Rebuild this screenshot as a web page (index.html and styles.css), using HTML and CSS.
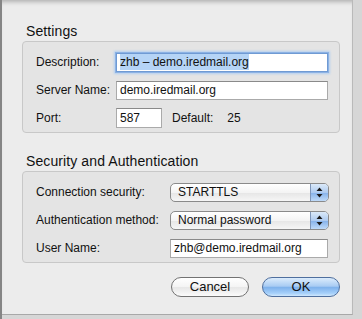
FILE: index.html
```html
<!DOCTYPE html>
<html>
  <head>
    <title>Account Settings</title>
    <link rel="stylesheet" href="styles.css">
  </head>
  <body>
    <div class="desk">
      <div class="sheet">
        <h2 class="group-title">Settings</h2>
        <div class="group">
          <div class="row">
            <span class="label">Description:</span>
            <div class="field focused"><span class="selected">zhb – demo.iredmail.org</span></div>
          </div>
          <div class="row">
            <span class="label">Server Name:</span>
            <div class="field">demo.iredmail.org</div>
          </div>
          <div class="row">
            <span class="label">Port:</span>
            <div class="field port">587</div>
            <span class="default-label">Default:</span>
            <span class="default-value">25</span>
          </div>
        </div>

        <h2 class="group-title">Security and Authentication</h2>
        <div class="group security">
          <div class="row">
            <span class="label">Connection security:</span>
            <div class="popup">
              <span class="popup-text">STARTTLS</span>
              <span class="popup-arrows">
                <svg width="7" height="11" viewBox="0 0 7 11">
                  <path d="M3.5 0.5 L6.5 4 H0.5 Z M3.5 10.5 L6.5 7 H0.5 Z" fill="#1a1a1a"/>
                </svg>
              </span>
            </div>
          </div>
          <div class="row">
            <span class="label">Authentication method:</span>
            <div class="popup">
              <span class="popup-text">Normal password</span>
              <span class="popup-arrows">
                <svg width="7" height="11" viewBox="0 0 7 11">
                  <path d="M3.5 0.5 L6.5 4 H0.5 Z M3.5 10.5 L6.5 7 H0.5 Z" fill="#1a1a1a"/>
                </svg>
              </span>
            </div>
          </div>
          <div class="row">
            <span class="label">User Name:</span>
            <div class="field user">zhb@demo.iredmail.org</div>
          </div>
        </div>

        <div class="actions">
          <button class="btn" type="button">Cancel</button>
          <button class="btn btn-primary" type="button">OK</button>
        </div>
      </div>
    </div>
  </body>
</html>
```

FILE: styles.css
```css
body {
  margin: 0;
  font-family: "Liberation Sans", Arial, sans-serif;
  font-size: 12px;
  color: #111;
}

.desk {
  display: flex;
  align-items: flex-start;
  width: 362px;
  height: 319px;
  box-sizing: border-box;
  border-left: 2px solid #858585;
  background-color: #d6d6d6;
}

.sheet {
  width: 351px;
  height: 315px;
  box-sizing: border-box;
  padding: 23px 0 0 20px;
  background-color: #ececec;
  border-right: 1px solid #b9b9b9;
  border-bottom: 1px solid #a8a8a8;
  box-shadow: inset 0 5px 4px -3px rgba(0, 0, 0, 0.25);
}

.group-title {
  margin: 0 0 2px 4px;
  font-size: 14px;
  font-weight: normal;
  line-height: 16px;
  letter-spacing: 0.1px;
}

.group + .group-title {
  margin-top: 20px;
}

.group {
  width: 318px;
  box-sizing: border-box;
  padding: 10px 11px 4px 13px;
  display: flex;
  flex-direction: column;
  gap: 8px;
  background-color: #e4e4e4;
  border: 1px solid #c8c8c8;
  border-radius: 4px;
}

.group.security {
  padding-right: 10px;
}

.row {
  display: flex;
  align-items: center;
  height: 20px;
}

.label {
  width: 80px;
  flex: none;
}

.security .label {
  width: 134px;
}

.field {
  flex: 1;
  height: 19px;
  box-sizing: border-box;
  padding: 0 3px;
  line-height: 17px;
  background-color: #fff;
  border: 1px solid #aaa;
  border-top-color: #8a8a8a;
  white-space: nowrap;
}

.field.focused {
  border-color: #6f9ad3;
  box-shadow: 0 0 0 1px #8cb2e4, 0 0 2px 2px #b3cff0;
}

.field .selected {
  background-color: #b5d4f6;
  padding: 1px 0;
}

.field.port {
  flex: none;
  width: 46px;
  height: 20px;
  line-height: 18px;
}

.field.user {
  margin-right: 1px;
}

.default-label {
  margin-left: 10px;
}

.default-value {
  margin-left: 14px;
}

.popup {
  flex: 1;
  height: 19px;
  box-sizing: border-box;
  display: flex;
  overflow: hidden;
  border: 1px solid #8a8a8a;
  border-radius: 5px;
  background: linear-gradient(#ffffff, #f4f4f4 50%, #e6e6e6 52%, #f6f6f6);
}

.popup-text {
  flex: 1;
  padding-left: 7px;
  line-height: 17px;
}

.popup-arrows {
  width: 17px;
  display: flex;
  align-items: center;
  justify-content: center;
  border-left: 1px solid #7e95b8;
  background: linear-gradient(#dbe9f9, #aecbf0 50%, #86b2ea 53%, #bfdaf8);
}

.actions {
  width: 318px;
  margin-top: 14px;
  display: flex;
  justify-content: flex-end;
  gap: 13px;
}

.btn {
  width: 78px;
  height: 20px;
  padding: 0;
  font-family: inherit;
  font-size: 13px;
  line-height: 18px;
  color: #111;
  border: 1px solid #727272;
  border-radius: 10px;
  background: linear-gradient(#ffffff, #f4f4f4 50%, #e7e7e7 53%, #fbfbfb);
}

.btn-primary {
  border-color: #4f6f9e;
  background: linear-gradient(#dcecfc, #a9ccf3 45%, #7fb2ec 53%, #a6d0fa 85%, #d0e8fd);
}
```
